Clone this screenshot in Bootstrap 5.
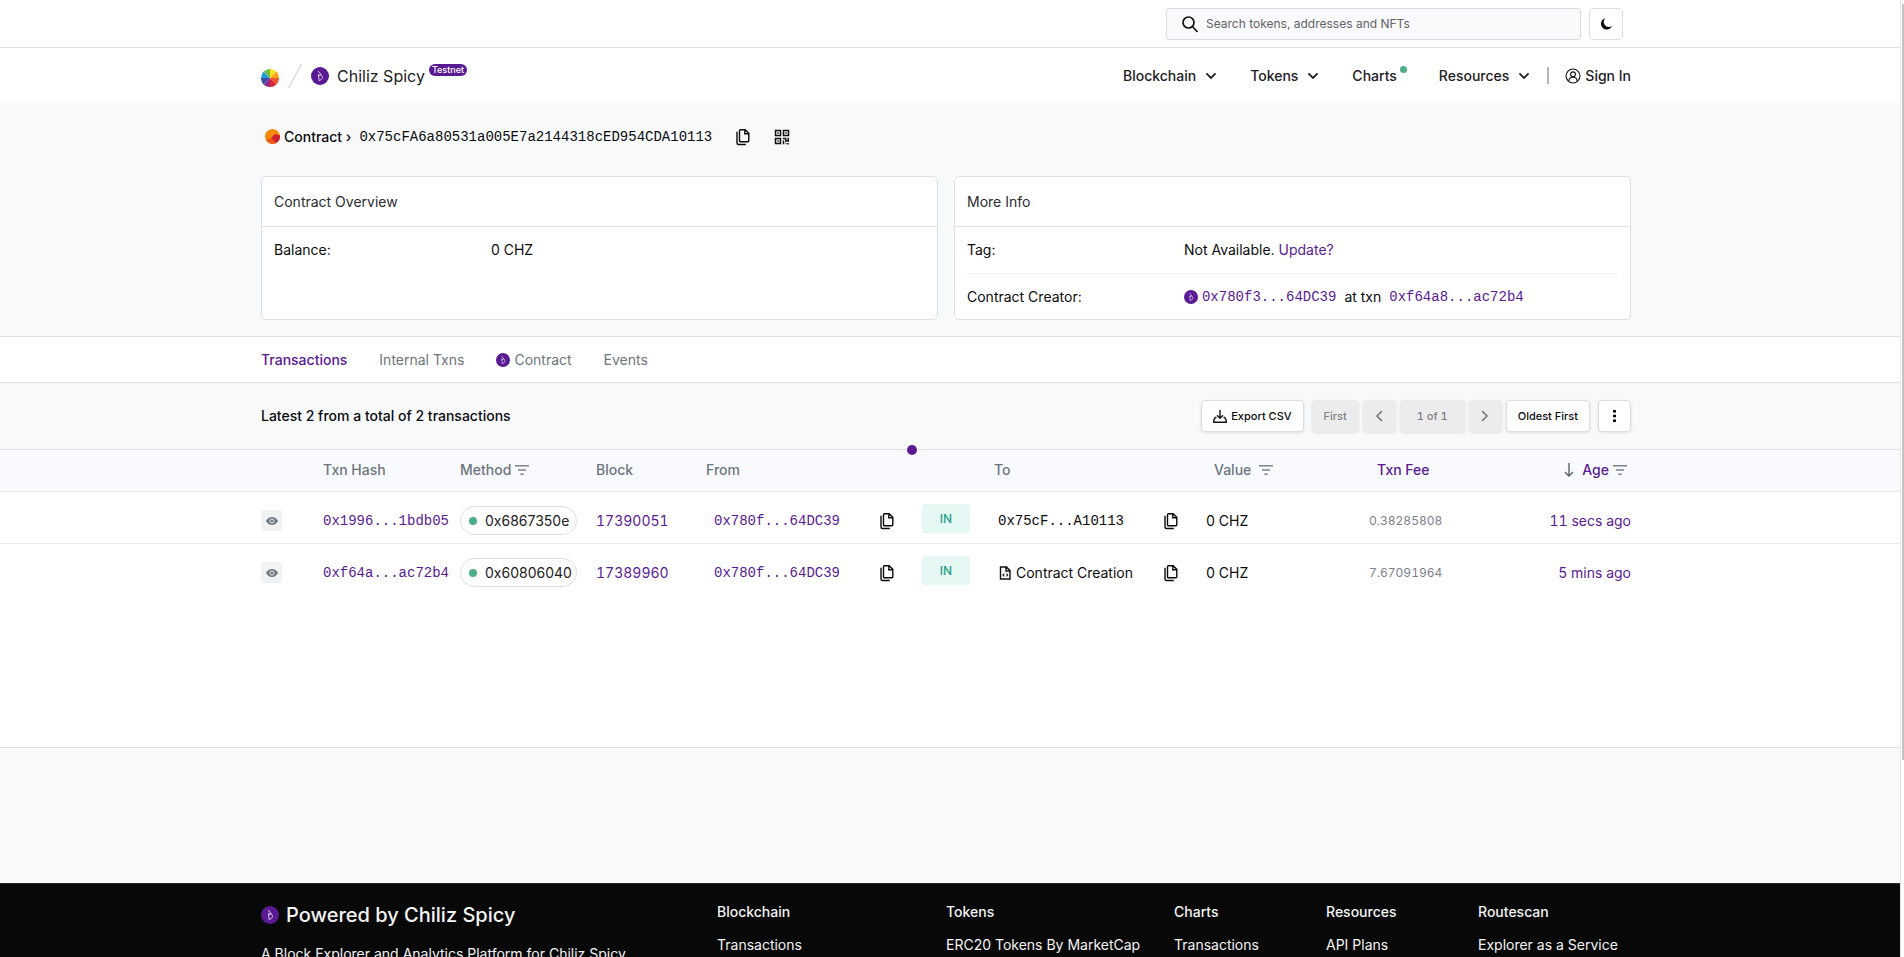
<!DOCTYPE html>
<html lang="en">
<head>
<meta charset="utf-8">
<meta name="viewport" content="width=device-width, initial-scale=1">
<title>Contract | Chiliz Spicy Testnet</title>
<link rel="stylesheet" href="https://cdn.jsdelivr.net/npm/bootstrap@5.3.0/dist/css/bootstrap.min.css">
<style>
:root{--brand:#5a1a93;--line:#dee0e2;--shade:#f7f9fb;--ink:#0b0b0d}
html{overflow:hidden}
body{font-family:Inter,"Liberation Sans",sans-serif;font-size:14px;line-height:20px;color:var(--ink);background:var(--shade);padding-right:4px}
a{color:var(--brand);text-decoration:none}
svg{display:block;flex:none}
.band{padding-right:8px}
.wrap{width:100%;max-width:1370px;margin:0 auto}
.hex{font-family:"Liberation Mono",monospace;font-size:14px}
.topbar{height:48px;border-bottom:1px solid var(--line)}
.searchbox{width:415px;height:32px;background:#fafafd;border:1px solid #d9dbdf;border-radius:3px;padding:0 14px;gap:7px}
.searchbox input{border:0;background:none;outline:0;font-size:12px;padding:0;color:#555}
.searchbox input::placeholder{color:#5f6266;opacity:1}
.themebtn{width:34px;height:32px;border:1px solid #dddfe3;border-radius:5px;background:#fff;padding:0 0 0 8px;margin:0 8px}
.mainnav{height:55px;font-weight:500}
.mainnav a{color:#1e2024}
.brandname{font-size:16px;font-weight:400}
.pill-net{font-size:9px;line-height:12px;background:var(--brand);color:#fff;border-radius:6px;padding:0 3px;margin:0 0 12px 4px;font-weight:500}
.livedot{width:7px;height:7px;border-radius:50%;background:#4caf86;margin:0 0 12px 3px}
.vline{width:2px;height:17px;background:#b5b8bd}
.crumb{height:73px;padding:0 0 6px 4px}
.panel{border:1px solid var(--line);border-radius:5px;background:#fff;height:144px;flex:1 1 0}
.panel-top{height:50px;border-bottom:1px solid var(--line);padding:0 12px;color:#2a2c30}
.panel-line{height:46px;margin:0 12px}
.panel-line + .panel-line{border-top:1px solid #eff0f2}
.panel-line dt{width:33.33%;font-weight:400}
.panel-line dd{margin:0}
.tabs{height:47px;border-top:1px solid var(--line);border-bottom:1px solid var(--line);margin-top:16px}
.tabs a{color:#6c757d}
.tabs a.on{color:var(--brand);font-weight:500}
.listbar{height:66px;font-weight:500}
.tool{height:32px;font-size:11px;line-height:18px;border:1px solid #dcdee1;border-radius:4px;background:#fff;color:var(--ink);font-weight:500;padding:0 11px;box-shadow:0 1px 3px rgba(0,0,0,.1);display:flex;align-items:center;justify-content:center;font-variant-numeric:tabular-nums}
.tool:disabled{background:#ececee;border-color:#ececee;color:#7d8084}
.tool-sq{width:33px;padding:0}
.listhead{border-top:1px solid var(--line)}
.loader{width:10px;height:10px;border-radius:50%;background:var(--brand);position:absolute;left:calc(48% - 5px);top:-5px;z-index:2}
.txns{table-layout:fixed;width:100%;border-collapse:collapse}
.txns th{height:41px;font-weight:500;color:#6c757d;background:#f9fafe;padding:0;border-bottom:1px solid #e6e8eb}
.txns td{height:52px;padding:7px 0 0;border-bottom:1px solid #ebecef;background:#fff;font-variant-numeric:tabular-nums}
.txns tbody tr:last-child td{border-bottom-color:#fff}
.eye{display:block;width:21px;height:21px;background:#f1f2f4;border:0;border-radius:3px;padding:0}
.icobtn{display:block;border:0;background:none;padding:0;color:inherit}
.method{border:1px solid #dcdee1;border-radius:15px;height:29px;width:117px;gap:8px;padding-left:8px;color:#1e2024;font-variant-numeric:normal}
.method i{width:8px;height:8px;border-radius:50%;background:#4caf86}
.dir{width:48px;height:29px;border-radius:3px;background:#e6f8f4;color:#27a085;font-size:12px;font-weight:500;margin-bottom:4px}
.fee{font-size:12px;color:#7a818c;font-weight:400}
.listbody{min-height:299px;background:#fff;border-bottom:1px solid var(--line)}
footer{background:#080808;color:#f3f3f3;margin-top:135px;padding:18px 8px 40px 0;border-top:1px solid #26262c}
footer a{color:#f3f3f3}
.foot-title{font-size:20px;line-height:26px;font-weight:500;gap:7px}
.foot-grid{display:grid;grid-template-columns:456fr 229fr 228fr 152fr 152fr 153fr}
.foot-grid h3{font-size:14px;line-height:20px;font-weight:500;margin:0 0 13px}
.track{position:fixed;right:0;top:0;bottom:0;width:4px;background:#fff;border-left:1px solid #e4e4e6}
.thumb{position:absolute;right:0;top:4px;height:79%;width:2px;background:#c3c3c6}
</style>
</head>
<body>
<svg width="0" height="0" class="position-absolute" aria-hidden="true">
<symbol id="copy" viewBox="0 0 14 18"><path d="M4.500 1.700h4.700l3.600 3.600V12.700a1 1 0 0 1-1 1H4.500a1 1 0 0 1-1-1V2.700a1 1 0 0 1 1-1ZM8.800 1.700v4h4M1 3.700V15a1.500 1.500 0 0 0 1.500 1.500h7.300" fill="none" stroke="currentColor" stroke-width="1.400"/></symbol>
<symbol id="chz" viewBox="0 0 18 18"><circle cx="9" cy="9" r="9" fill="#5a1a93"/><path d="M7 4l2.300 2.600-.3 2.200L7.300 7.600l.9 6.200c2.600-1.200 3.500-2.700 3.200-4.300L9.300 6.600" fill="none" stroke="#e6d8f2" stroke-width=".9"/></symbol>
<symbol id="down" viewBox="0 0 10 7"><path d="M1 1.200l4 4 4-4" fill="none" stroke="currentColor" stroke-width="1.600"/></symbol>
<symbol id="filter" viewBox="0 0 14 10"><path d="M0 .8h14M3 5h8M5.300 9.200h3.400" fill="none" stroke="#7d848c" stroke-width="1.500"/></symbol>
<symbol id="eye" viewBox="0 0 12 8"><path d="M0 4c3-5.300 9-5.300 12 0-3 5.300-9 5.300-12 0Z" fill="#6c757d"/><circle cx="6" cy="4" r="2.100" fill="none" stroke="#f1f2f4"/></symbol>
</svg>

<header class="bg-white">
<div class="topbar band"><div class="wrap h-100 d-flex align-items-center justify-content-end">
<label class="searchbox d-flex align-items-center"><svg width="18" height="18" viewBox="0 0 18 18" fill="none" stroke="#111" stroke-width="1.700"><circle cx="7.500" cy="7.500" r="5.500"/><path d="M11.500 11.500l5 5.500"/></svg><input class="flex-fill" type="text" placeholder="Search tokens, addresses and NFTs" aria-label="Search"></label>
<button class="themebtn" type="button" aria-label="Toggle theme"><svg width="16" height="14" viewBox="0 0 16 14"><path d="M7.500 1.200A5.700 5.700 0 1 0 14 8.800 5 5 0 0 1 7.500 1.200Z" fill="#0b0b0d"/></svg></button>
</div></div>
<nav class="mainnav band" aria-label="Main"><div class="wrap h-100 d-flex align-items-center justify-content-between">
<div class="d-flex align-items-center">
<svg class="mt-1" width="18" height="18" viewBox="0 0 18 18"><path d="M9 9V0a9 9 0 0 1 6.400 2.600Z" fill="#f8e71c"/><path d="M9 9l6.400-6.400A9 9 0 0 1 18 9Z" fill="#f9a11b"/><path d="M9 9h9a9 9 0 0 1-2.600 6.400Z" fill="#f0582b"/><path d="M9 9l6.400 6.400A9 9 0 0 1 9 18Z" fill="#dd2438"/><path d="M9 9v9a9 9 0 0 1-6.400-2.600Z" fill="#8d2a86"/><path d="M9 9l-6.400 6.400A9 9 0 0 1 0 9Z" fill="#3b4ba8"/><path d="M9 9H0a9 9 0 0 1 2.600-6.400Z" fill="#219dd8"/><path d="M9 9L2.600 2.600A9 9 0 0 1 9 0Z" fill="#70bf44"/></svg>
<svg class="mx-2" width="16" height="24" viewBox="0 0 16 24"><path d="M14.500 0L1.500 24" stroke="#dcdde0" stroke-width="1.500"/></svg>
<svg width="18" height="18"><use href="#chz"/></svg>
<a href="#" class="brandname ms-2">Chiliz Spicy</a><span class="pill-net">Testnet</span>
</div>
<div class="d-flex align-items-center">
<a href="#" class="d-flex align-items-center gap-2 me-4 pe-2">Blockchain <svg width="14" height="8"><use href="#down"/></svg></a>
<a href="#" class="d-flex align-items-center gap-2 me-4 pe-2">Tokens <svg width="14" height="8"><use href="#down"/></svg></a>
<a href="#" class="d-flex align-items-center me-4 pe-2">Charts<span class="livedot"></span></a>
<a href="#" class="d-flex align-items-center gap-2 me-3">Resources <svg width="14" height="8"><use href="#down"/></svg></a>
<span class="vline me-3"></span>
<a href="#" class="d-flex align-items-center gap-1"><svg width="16" height="16" viewBox="0 0 16 16" fill="none" stroke="#111" stroke-width="1.100"><circle cx="8" cy="8" r="7"/><circle cx="8" cy="6.300" r="2.400"/><path d="M3.800 13.200c.4-5.200 8-5.200 8.400 0"/></svg>Sign In</a>
</div></div></nav>
</header>

<main>
<div class="band"><div class="wrap">
<div class="crumb d-flex align-items-center fw-medium">
<svg width="15" height="15" viewBox="0 0 15 15"><circle cx="7.500" cy="7.500" r="7.500" fill="#f58a0b"/><path d="M1 11a7.500 7.500 0 0 0 10 3l-3-5Z" fill="#ee5a14"/><path d="M6 9l4-4 5 1.500a7.500 7.500 0 0 1-4 7.500Z" fill="#cf2031"/></svg>
<span class="ms-1">Contract ›</span><span class="hex ms-2">0x75cFA6a80531a005E7a2144318cED954CDA10113</span>
<button type="button" class="icobtn ms-4" aria-label="Copy address"><svg width="14" height="18"><use href="#copy"/></svg></button>
<button type="button" class="icobtn ms-4" aria-label="Show QR code"><svg width="16" height="16" viewBox="0 0 16 16" fill="none" stroke="#111" stroke-width="1.500"><path d="M1.500 1.500h5v5h-5zM9.500 1.500h5v5h-5zM1.500 9.500h5v5h-5z"/><path d="M3.300 4h1.400M11.300 4h1.400M3.300 12h1.400M8.800 9.500h3v2.500h2.500V8.800M9.500 11.500v3.800M11.500 14.500h1M14 14v1.500"/></svg></button>
</div>
<div class="d-flex gap-3">
<section class="panel"><div class="panel-top d-flex align-items-center">Contract Overview</div>
<dl class="m-0"><div class="panel-line d-flex align-items-center"><dt>Balance:</dt><dd>0 CHZ</dd></div></dl></section>
<section class="panel"><div class="panel-top d-flex align-items-center">More Info</div>
<dl class="m-0"><div class="panel-line d-flex align-items-center"><dt>Tag:</dt><dd>Not Available. <a href="#">Update?</a></dd></div>
<div class="panel-line d-flex align-items-center"><dt>Contract Creator:</dt><dd class="d-flex align-items-center"><svg width="14" height="14"><use href="#chz"/></svg><a href="#" class="hex ms-1">0x780f3...64DC39</a><span class="mx-2">at txn</span><a href="#" class="hex">0xf64a8...ac72b4</a></dd></div></dl></section>
</div></div></div>

<div class="tabs bg-white band d-flex"><nav class="wrap d-flex align-items-center" aria-label="Contract data">
<a href="#" class="on me-4 pe-2">Transactions</a><a href="#" class="me-4 pe-2">Internal Txns</a><a href="#" class="me-4 pe-2 d-flex align-items-center gap-1"><svg width="14" height="14"><use href="#chz"/></svg>Contract</a><a href="#">Events</a>
</nav></div>

<div class="band"><div class="wrap listbar d-flex align-items-center">
<span class="me-auto">Latest 2 from a total of 2 transactions</span>
<button type="button" class="tool gap-1 me-2"><svg width="14" height="13" viewBox="0 0 14 13" fill="none" stroke="#111" stroke-width="1.400"><path d="M7 0v8M4 5.300l3 3 3-3M3.500 7.500H2.300L.8 10.200v2h12.400v-2l-1.500-2.700h-1.200"/></svg>Export CSV</button>
<div class="d-flex gap-1">
<button type="button" class="tool" disabled>First</button>
<button type="button" class="tool tool-sq" disabled aria-label="Previous"><svg width="8" height="12" viewBox="0 0 8 12"><path d="M7 1L2 6l5 5" fill="none" stroke="#666" stroke-width="1.400"/></svg></button>
<button type="button" class="tool px-3" disabled>1 of 1</button>
<button type="button" class="tool tool-sq" disabled aria-label="Next"><svg width="8" height="12" viewBox="0 0 8 12"><path d="M1 1l5 5-5 5" fill="none" stroke="#666" stroke-width="1.400"/></svg></button>
<button type="button" class="tool">Oldest First</button></div>
<button type="button" class="tool tool-sq ms-2" aria-label="More"><svg width="3" height="12" viewBox="0 0 3 12"><path d="M0 0h3v2.500H0zM0 4.700h3v2.500H0zM0 9.500h3V12H0z"/></svg></button>
</div></div>

<div class="listhead listbody position-relative"><span class="loader"></span>
<table class="txns">
<colgroup><col><col style="width:62px"><col style="width:137px"><col style="width:136px"><col style="width:110px"><col style="width:174px"><col style="width:42px"><col style="width:72px"><col style="width:170px"><col style="width:42px"><col style="width:163px"><col style="width:114px"><col style="width:148px"><col><col style="width:8px"></colgroup>
<thead><tr><th></th><th></th><th scope="col">Txn Hash</th><th scope="col"><span class="d-flex align-items-center gap-1">Method <svg width="14" height="10"><use href="#filter"/></svg></span></th><th scope="col">Block</th><th scope="col">From</th><th></th><th></th><th scope="col">To</th><th></th><th scope="col"><span class="d-flex align-items-center gap-2 ps-2">Value <svg width="14" height="10"><use href="#filter"/></svg></span></th><th scope="col"><a href="#" class="ps-2">Txn Fee</a></th><th scope="col"><span class="d-flex align-items-center justify-content-end gap-1 pe-1"><svg class="me-1" width="10" height="14" viewBox="0 0 10 14"><path d="M5 0v13M1 9l4 4 4-4" fill="none" stroke="#5d636b" stroke-width="1.400"/></svg><a href="#">Age</a><svg width="14" height="10"><use href="#filter"/></svg></span></th><th></th><th></th></tr></thead>
<tbody>
<tr><td></td><td><button type="button" class="eye" aria-label="Preview"><svg class="m-auto" width="12" height="8"><use href="#eye"/></svg></button></td><td><a href="#" class="hex">0x1996...1bdb05</a></td><td><span class="method d-flex align-items-center"><i></i>0x6867350e</span></td><td><a href="#">17390051</a></td><td><a href="#" class="hex ps-2">0x780f...64DC39</a></td><td><button type="button" class="icobtn" aria-label="Copy"><svg width="14" height="18"><use href="#copy"/></svg></button></td><td><span class="dir d-flex align-items-center justify-content-center">IN</span></td><td><span class="hex ps-1">0x75cF...A10113</span></td><td><button type="button" class="icobtn" aria-label="Copy"><svg width="14" height="18"><use href="#copy"/></svg></button></td><td>0 CHZ</td><td><span class="fee">0.38285808</span></td><td class="text-end"><a href="#">11 secs ago</a></td><td></td><td></td></tr>
<tr><td></td><td><button type="button" class="eye" aria-label="Preview"><svg class="m-auto" width="12" height="8"><use href="#eye"/></svg></button></td><td><a href="#" class="hex">0xf64a...ac72b4</a></td><td><span class="method d-flex align-items-center"><i></i>0x60806040</span></td><td><a href="#">17389960</a></td><td><a href="#" class="hex ps-2">0x780f...64DC39</a></td><td><button type="button" class="icobtn" aria-label="Copy"><svg width="14" height="18"><use href="#copy"/></svg></button></td><td><span class="dir d-flex align-items-center justify-content-center">IN</span></td><td><span class="d-flex align-items-center gap-1 ps-1"><svg width="14" height="14" viewBox="0 0 14 14" fill="none" stroke="#111" stroke-width="1.400"><path d="M2.500 1h6L12 4.500V13H2.500ZM8 1v4h4"/><path d="M6.200 7.500L5 8.900l1.200 1.400M8.500 7.500l1.200 1.400-1.200 1.400" stroke-width="1.100"/></svg>Contract Creation</span></td><td><button type="button" class="icobtn" aria-label="Copy"><svg width="14" height="18"><use href="#copy"/></svg></button></td><td>0 CHZ</td><td><span class="fee">7.67091964</span></td><td class="text-end"><a href="#">5 mins ago</a></td><td></td><td></td></tr>
</tbody></table></div>
</main>

<footer><div class="wrap foot-grid">
<div><div class="foot-title d-flex align-items-center mb-3"><svg width="18" height="18"><use href="#chz"/></svg>Powered by Chiliz Spicy</div><p>A Block Explorer and Analytics Platform for Chiliz Spicy.</p></div>
<div><h3>Blockchain</h3><a href="#">Transactions</a></div>
<div><h3>Tokens</h3><a href="#">ERC20 Tokens By MarketCap</a></div>
<div><h3>Charts</h3><a href="#">Transactions</a></div>
<div><h3>Resources</h3><a href="#">API Plans</a></div>
<div><h3>Routescan</h3><a href="#">Explorer as a Service</a></div>
</div></footer>
<div class="track" aria-hidden="true"><div class="thumb"></div></div>
<script src="https://cdn.jsdelivr.net/npm/bootstrap@5.3.0/dist/js/bootstrap.bundle.min.js"></script>
</body>
</html>
